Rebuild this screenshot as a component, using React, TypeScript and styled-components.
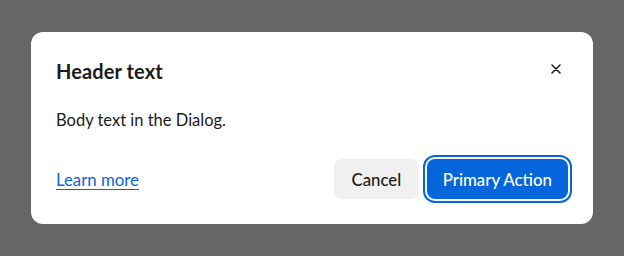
import styled, { createGlobalStyle } from "styled-components";

const GlobalStyle = createGlobalStyle`
  html, body {
    margin: 0;
    padding: 0;
    background: #666666;
  }
  body {
    font-family: Lato, "Noto Sans", sans-serif;
    color: #1b1b1b;
  }
`;

function CloseIcon() {
  return (
    <svg width="10" height="10" viewBox="0 0 10 10" fill="none">
      <path d="M1 1L9 9M9 1L1 9" stroke="#1b1b1b" strokeWidth="1.5" strokeLinecap="round" />
    </svg>
  );
}

export default function App() {
  return (
    <>
      <GlobalStyle />
      <Backdrop>
        <Dialog role="dialog" aria-labelledby="dlg-title">
          <Header>
            <Title id="dlg-title">Header text</Title>
            <CloseButton aria-label="Close">
              <CloseIcon />
            </CloseButton>
          </Header>
          <Body>Body text in the Dialog.</Body>
          <Footer>
            <LearnMore href="#">Learn more</LearnMore>
            <Actions>
              <Button>Cancel</Button>
              <Button $primary>Primary Action</Button>
            </Actions>
          </Footer>
        </Dialog>
      </Backdrop>
    </>
  );
}

const Backdrop = styled.div`
  width: 624px;
  height: 256px;
  box-sizing: border-box;
  padding: 32px 31px;
  background: #666666;
`;

const Dialog = styled.div`
  box-sizing: border-box;
  width: 562px;
  height: 192px;
  background: #ffffff;
  border-radius: 12px;
  padding: 24px 25px 24px 25px;
  display: flex;
  flex-direction: column;
`;

const Header = styled.div`
  display: flex;
  align-items: center;
  justify-content: space-between;
  height: 30px;
`;

const Title = styled.h2`
  margin: 0;
  font-size: 20px;
  font-weight: 700;
  line-height: 28px;
  letter-spacing: 0.1px;
`;

const CloseButton = styled.button`
  width: 24px;
  height: 24px;
  margin-top: -4px;
  padding: 0;
  border: none;
  background: transparent;
  display: flex;
  align-items: center;
  justify-content: center;
  cursor: pointer;
`;

const Body = styled.p`
  margin: 22px 0 0;
  font-size: 16.5px;
  line-height: 24px;
`;

const Footer = styled.div`
  margin-top: 27px;
  display: flex;
  align-items: center;
  justify-content: space-between;
`;

const LearnMore = styled.a`
  font-size: 16.8px;
  color: #0a66d8;
  text-decoration: underline;
  text-underline-offset: 3px;
`;

const Actions = styled.div`
  display: flex;
  gap: 8px;
`;

const Button = styled.button<{ $primary?: boolean }>`
  height: 40px;
  padding: ${(p) => (p.$primary ? "0 16px" : "0 17.5px")};
  border: none;
  border-radius: 8px;
  font-family: Lato, "Noto Sans", sans-serif;
  font-size: 16.8px;
  font-weight: 500;
  cursor: pointer;
  background: ${(p) => (p.$primary ? "#0566dc" : "#f0f0f0")};
  color: ${(p) => (p.$primary ? "#ffffff" : "#1b1b1b")};
  box-shadow: ${(p) =>
    p.$primary ? "0 0 0 2px #ffffff, 0 0 0 4px #0566dc" : "none"};
`;
